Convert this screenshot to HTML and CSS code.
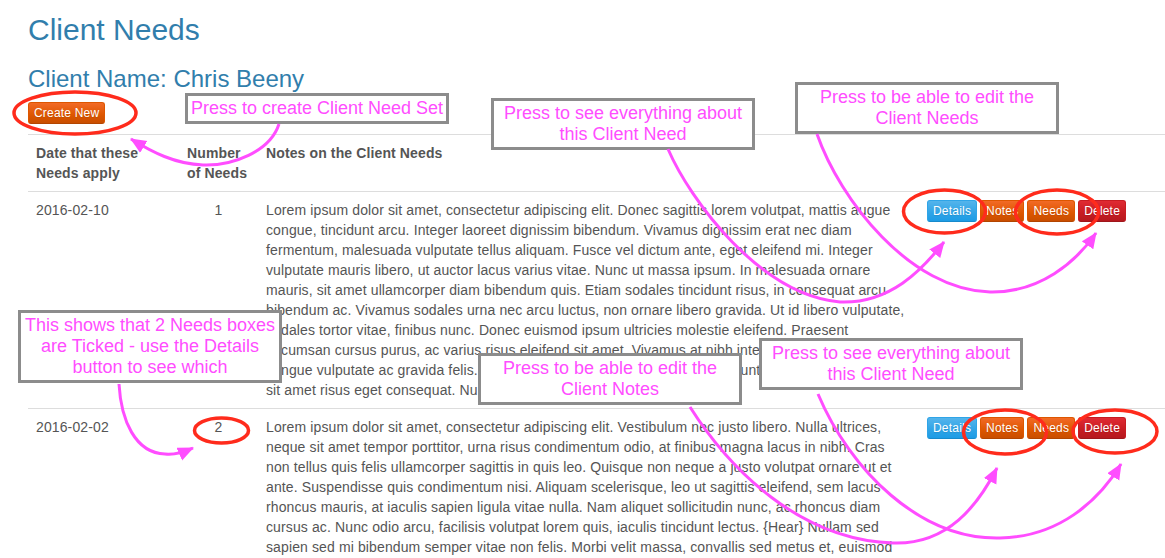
FILE: index.html
```html
<!DOCTYPE html>
<html lang="en">
<head>
<meta charset="utf-8">
<title>Client Needs</title>
<link rel="stylesheet" href="styles.css">
</head>
<body>
<div class="page">
  <main class="container">
    <h2 class="title">Client Needs</h2>
    <h3 class="client">Client Name: Chris Beeny</h3>
    <p class="create-row"><a class="btn btn-xs btn-warning" href="#">Create New</a></p>
    <table class="table">
      <colgroup>
        <col class="c-date">
        <col class="c-num">
        <col class="c-notes">
        <col class="c-act">
      </colgroup>
      <tr>
        <th>Date that these Needs apply</th>
        <th>Number of Needs</th>
        <th>Notes on the Client Needs</th>
        <th></th>
      </tr>
      <tr>
        <td>2016-02-10</td>
        <td class="num">1</td>
        <td>Lorem ipsum dolor sit amet, consectetur adipiscing elit. Donec sagittis lorem volutpat, mattis augue congue, tincidunt arcu. Integer laoreet dignissim bibendum. Vivamus dignissim erat nec diam fermentum, malesuada vulputate tellus aliquam. Fusce vel dictum ante, eget eleifend mi. Integer vulputate mauris libero, ut auctor lacus varius vitae. Nunc ut massa ipsum. In malesuada ornare mauris, sit amet ullamcorper diam bibendum quis. Etiam sodales tincidunt risus, in consequat arcu bibendum ac. Vivamus sodales urna nec arcu luctus, non ornare libero gravida. Ut id libero vulputate, sodales tortor vitae, finibus nunc. Donec euismod ipsum ultricies molestie eleifend. Praesent accumsan cursus purus, ac varius risus eleifend sit amet. Vivamus at nibh interdum, dictum nisi ut, congue vulputate ac gravida felis. Duis euismod mi sed neque nisi, et tincidunt ligula, pellentesque ut sit amet risus eget consequat. Nullam vitae.</td>
        <td>
          <div class="btn-group-row">
            <a class="btn btn-xs btn-primary" href="#">Details</a>
            <a class="btn btn-xs btn-warning" href="#">Notes</a>
            <a class="btn btn-xs btn-warning" href="#">Needs</a>
            <a class="btn btn-xs btn-danger" href="#">Delete</a>
          </div>
        </td>
      </tr>
      <tr>
        <td>2016-02-02</td>
        <td class="num">2</td>
        <td>Lorem ipsum dolor sit amet, consectetur adipiscing elit. Vestibulum nec justo libero. Nulla ultrices, neque sit amet tempor porttitor, urna risus condimentum odio, at finibus magna lacus in nibh. Cras non tellus quis felis ullamcorper sagittis in quis leo. Quisque non neque a justo volutpat ornare ut et ante. Suspendisse quis condimentum nisi. Aliquam scelerisque, leo ut sagittis eleifend, sem lacus rhoncus mauris, at iaculis sapien ligula vitae nulla. Nam aliquet sollicitudin nunc, ac rhoncus diam cursus ac. Nunc odio arcu, facilisis volutpat lorem quis, iaculis tincidunt lectus. {Hear} Nullam sed sapien sed mi bibendum semper vitae non felis. Morbi velit massa, convallis sed metus et, euismod pretium nunc. Sed at lacus vitae lorem tincidunt dictum.</td>
        <td>
          <div class="btn-group-row">
            <a class="btn btn-xs btn-primary" href="#">Details</a>
            <a class="btn btn-xs btn-warning" href="#">Notes</a>
            <a class="btn btn-xs btn-warning" href="#">Needs</a>
            <a class="btn btn-xs btn-danger" href="#">Delete</a>
          </div>
        </td>
      </tr>
    </table>
  </main>

  <div class="annotations">
    <div class="note note-a">Press to create Client Need Set</div>
    <div class="note note-b">Press to see everything about this Client Need</div>
    <div class="note note-c">Press to be able to edit the Client Needs</div>
    <div class="note note-d">This shows that 2 Needs boxes are Ticked - use the Details button to see which</div>
    <div class="note note-e">Press to be able to edit the Client Notes</div>
    <div class="note note-f">Press to see everything about this Client Need</div>

    <svg class="marks" width="1165" height="558" viewBox="0 0 1165 558" xmlns="http://www.w3.org/2000/svg">
      <defs>
        <marker id="ah" markerUnits="userSpaceOnUse" markerWidth="18" markerHeight="16" refX="15" refY="7" orient="auto">
          <path d="M0,0 L16,7 L0,14 Z" fill="#ff4dff"/>
        </marker>
      </defs>
      <g fill="none" stroke="#ff2b1c" stroke-width="3.5">
        <ellipse cx="75" cy="113" rx="61" ry="21"/>
        <ellipse cx="944.5" cy="211.5" rx="41" ry="21.5"/>
        <ellipse cx="1057" cy="212" rx="41.5" ry="22"/>
        <ellipse cx="221.5" cy="430.5" rx="27" ry="12.5"/>
        <ellipse cx="1005" cy="432" rx="41.5" ry="22"/>
        <ellipse cx="1115" cy="431.5" rx="42" ry="21.5"/>
      </g>
      <g fill="none" stroke="#ff4dff" stroke-width="3" marker-end="url(#ah)">
        <path d="M279,124 C270,152 232,166 203,165 C175,164 152,152 131,139"/>
        <path d="M668,149 C690,200 760,295 840,302 C890,304 922,270 944,242"/>
        <path d="M817,134 C840,200 910,290 990,292 C1040,293 1076,262 1096,233"/>
        <path d="M119,384 C121,420 135,453 165,454 C176,455 184,452 193,448"/>
        <path d="M690,407 C730,470 800,540 893,543 C948,545 978,505 997,468"/>
        <path d="M818,394 C850,470 920,540 1000,538 C1058,537 1098,502 1121,464"/>
      </g>
    </svg>
  </div>
</div>
</body>
</html>
```
FILE: styles.css
```css
html {
  overflow: hidden;
}

body {
  margin: 0;
  background: #fff;
  color: #555555;
  font-family: "Liberation Sans", Arial, Helvetica, sans-serif;
  font-size: 14px;
  line-height: 20px;
}

.page {
  position: relative;
  width: 1165px;
  min-height: 558px;
}

.container {
  padding: 1px 0 0 28px;
}

.title,
.client {
  color: #317eac;
  font-weight: 500;
  font-family: "Liberation Sans", Arial, Helvetica, sans-serif;
}

.title {
  margin: 12px 0 10px;
  font-size: 30px;
  line-height: 33px;
}

.client {
  margin: 20px 0 10px;
  font-size: 24px;
  line-height: 26.4px;
}

.create-row {
  margin: 0 0 10px;
}

/* buttons (Cerulean-like) */
.btn {
  display: inline-block;
  box-sizing: border-box;
  border: 1px solid transparent;
  color: #fff;
  text-decoration: none;
  text-align: center;
  white-space: nowrap;
  text-shadow: 0 1px 1px rgba(0, 0, 0, 0.1);
}

.btn-xs {
  padding: 1px 5px;
  font-size: 12px;
  line-height: 18px;
  letter-spacing: 0.2px;
  border-radius: 3px;
}

.btn-primary {
  background-image: linear-gradient(#54b4eb, #2fa4e7 60%, #1d9ce5);
  border-color: #2fa4e7;
  border-bottom-color: #178acc;
}

.btn-warning {
  background-image: linear-gradient(#f26a26, #dd5600 60%, #c94e00);
  border-color: #dd5600;
  border-bottom-color: #b34500;
}

.btn-danger {
  background-image: linear-gradient(#e02a33, #c71c22 60%, #b5191f);
  border-color: #c71c22;
  border-bottom-color: #9f161b;
}

.btn-group-row {
  display: flex;
  gap: 3px;
}

/* table */
.table {
  width: 1137px;
  table-layout: fixed;
  border-collapse: collapse;
  border-spacing: 0;
  letter-spacing: 0.12px;
}

.c-date { width: 151px; }
.c-num { width: 79px; }
.c-notes { width: 661px; }
.c-act { width: 246px; }

.table th,
.table td {
  padding: 8px;
  border-top: 1px solid #dddddd;
  vertical-align: top;
  text-align: left;
  line-height: 20px;
}

.table th {
  font-weight: bold;
}

.table td.num {
  text-align: center;
}

/* annotation overlay */
.annotations {
  position: absolute;
  left: 0;
  top: 0;
  width: 1165px;
  height: 558px;
  pointer-events: none;
}

.note {
  position: absolute;
  width: 264px;
  box-sizing: border-box;
  border: 3px solid #8c8c8c;
  background: #fff;
  color: #ff4dff;
  font-family: "Liberation Sans", Arial, sans-serif;
  font-size: 18px;
  line-height: 21px;
  text-align: center;
  padding: 2px;
}

.note-a { left: 185px; top: 93px; }
.note-b { left: 491px; top: 98px; }
.note-c { left: 795px; top: 82px; }
.note-d { left: 18px; top: 310px; }
.note-e { left: 478px; top: 353px; }
.note-f { left: 759px; top: 338px; }

.marks {
  position: absolute;
  left: 0;
  top: 0;
}
```
